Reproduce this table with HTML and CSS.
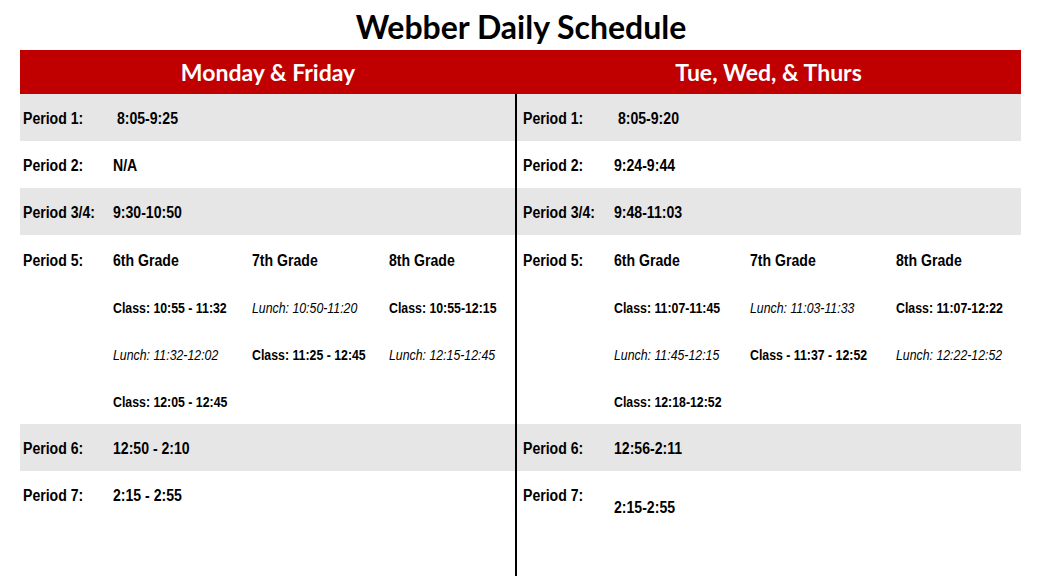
FILE: index.html
```html
<!DOCTYPE html>
<html>
<head>
<meta charset="utf-8">
<link rel="stylesheet" href="styles.css">
</head>
<body>
<h1 class="title">Webber Daily Schedule</h1>
<div class="schedule">
  <div class="head">
    <div class="head-cell left">Monday &amp; Friday</div>
    <div class="head-cell right">Tue, Wed, &amp; Thurs</div>
  </div>
  <div class="body">
    <div class="col col-left">
      <div class="row gray"><span class="lbl">Period 1:</span><span class="val">&nbsp;8:05-9:25</span></div>
      <div class="row"><span class="lbl">Period 2:</span><span class="val">N/A</span></div>
      <div class="row gray"><span class="lbl">Period 3/4:</span><span class="val">9:30-10:50</span></div>
      <div class="p5 p5-left">
        <span class="lbl">Period 5:</span>
        <span class="grade">6th Grade</span>
        <span class="grade">7th Grade</span>
        <span class="grade">8th Grade</span>
        <span></span>
        <span class="cls">Class: 10:55 - 11:32</span>
        <span class="lunch">Lunch: 10:50-11:20</span>
        <span class="cls">Class: 10:55-12:15</span>
        <span></span>
        <span class="lunch">Lunch: 11:32-12:02</span>
        <span class="cls">Class: 11:25 - 12:45</span>
        <span class="lunch">Lunch: 12:15-12:45</span>
        <span></span>
        <span class="cls">Class: 12:05 - 12:45</span>
        <span></span>
        <span></span>
      </div>
      <div class="row gray"><span class="lbl">Period 6:</span><span class="val">12:50 - 2:10</span></div>
      <div class="row"><span class="lbl">Period 7:</span><span class="val">2:15 - 2:55</span></div>
    </div>
    <div class="col col-right">
      <div class="row gray"><span class="lbl">Period 1:</span><span class="val">&nbsp;8:05-9:20</span></div>
      <div class="row"><span class="lbl">Period 2:</span><span class="val">9:24-9:44</span></div>
      <div class="row gray"><span class="lbl">Period 3/4:</span><span class="val">9:48-11:03</span></div>
      <div class="p5 p5-right">
        <span class="lbl">Period 5:</span>
        <span class="grade">6th Grade</span>
        <span class="grade">7th Grade</span>
        <span class="grade">8th Grade</span>
        <span></span>
        <span class="cls">Class: 11:07-11:45</span>
        <span class="lunch">Lunch: 11:03-11:33</span>
        <span class="cls">Class: 11:07-12:22</span>
        <span></span>
        <span class="lunch">Lunch: 11:45-12:15</span>
        <span class="cls">Class - 11:37 - 12:52</span>
        <span class="lunch">Lunch: 12:22-12:52</span>
        <span></span>
        <span class="cls">Class: 12:18-12:52</span>
        <span></span>
        <span></span>
      </div>
      <div class="row gray"><span class="lbl">Period 6:</span><span class="val">12:56-2:11</span></div>
      <div class="row"><span class="lbl">Period 7:</span><span class="val low">2:15-2:55</span></div>
    </div>
  </div>
</div>
</body>
</html>
```

FILE: styles.css
```css
html, body {
  margin: 0;
  padding: 0;
  background: #ffffff;
}
body {
  width: 1042px;
  height: 576px;
  overflow: hidden;
  font-family: "Liberation Sans", Arial, sans-serif;
  color: #000;
}
.title {
  margin: 0;
  height: 50px;
  line-height: 53px;
  text-align: center;
  font-family: Lato, "Open Sans", sans-serif;
  font-weight: 700;
  font-size: 32px;
  color: #000;
}
.schedule {
  width: 1001px;
  margin-left: 20px;
}
.head {
  display: flex;
  height: 44px;
  background: #c00000;
  color: #fff;
  font-family: Lato, "Open Sans", sans-serif;
  font-weight: 700;
  font-size: 23px;
}
.head-cell {
  display: flex;
  align-items: center;
  justify-content: center;
}
.head-cell.left { width: 496px; }
.head-cell.right { width: 505px; }
.body {
  display: flex;
  height: 482px;
}
.col-left {
  width: 497px;
  border-right: 2px solid #000;
  box-sizing: border-box;
}
.col-left .row, .col-left .p5 { padding-left: 3px; }
.col-right {
  flex: 1;
}
.col-right .row, .col-right .p5 { padding-left: 6px; }
.row {
  display: grid;
  grid-template-columns: 90px 1fr;
  height: 47px;
  box-sizing: border-box;
  padding-top: 2px;
  align-items: center;
  font-weight: 700;
  font-size: 16px;
}
.col-right .row { grid-template-columns: 91px 1fr; }
.row.gray { background: #e7e6e6; }
.lbl, .val, .grade, .cls, .lunch {
  white-space: pre;
  transform: scaleX(0.88);
  transform-origin: left center;
}
.val.low { transform: translateY(12px) scaleX(0.88); }
.p5 {
  display: grid;
  grid-template-rows: repeat(4, 47px);
  align-items: center;
  height: 189px;
  box-sizing: border-box;
  padding-top: 2px;
  font-size: 16px;
}
.p5-left { grid-template-columns: 90px 139px 137px 1fr; }
.p5-right { grid-template-columns: 91px 136px 146px 1fr; }
.p5 .lbl { font-weight: 700; }
.grade { font-weight: 700; font-size: 16px; }
.cls { font-weight: 700; font-size: 14px; }
.lunch { font-style: italic; font-size: 14px; }
```
